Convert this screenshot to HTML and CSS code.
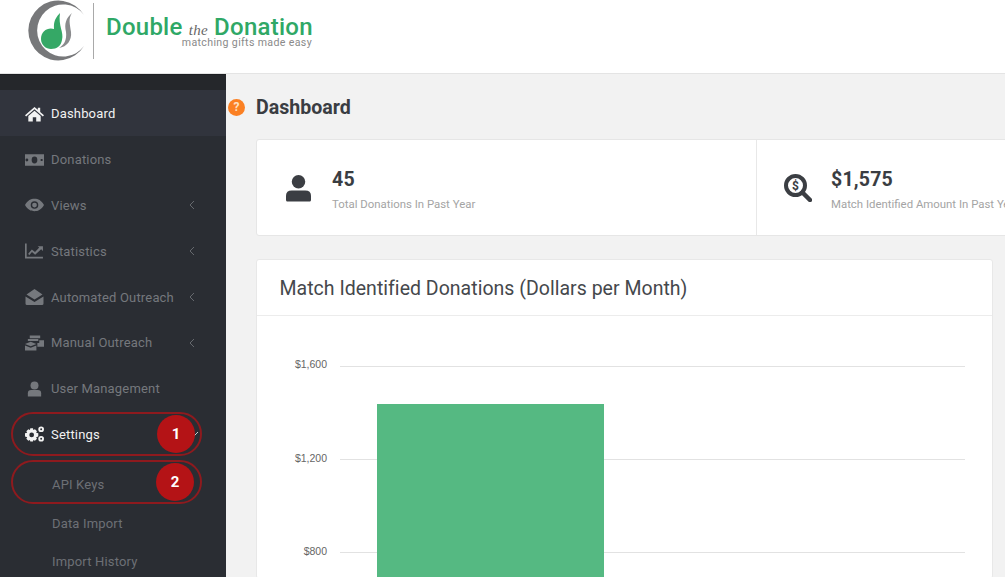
FILE: index.html
```html
<!DOCTYPE html>
<html lang="en">
<head>
    <meta charset="UTF-8">
    <meta name="viewport" content="width=device-width, initial-scale=1.0">
    <title>Dashboard</title>
    <link rel="stylesheet" href="styles.css">
</head>
<body>
    <header class="topo">
        <svg class="logo-marca" width="62" height="62" viewBox="0 0 62 62">
            <path d="M58 15 A30 30 0 1 0 58 46 A26 26 0 1 1 58 15 Z" fill="#77787a"/>
            <path d="M34 13 C27 20 28 25 28 29 C22 27 15 31 15 39 C15 45 20 49 25 49 C31 49 35 46 36 40 C38 32 32 26 34 13 Z" fill="#35a866"/>
            <path d="M46 13 C40 18 38 24 40 32 C41 40 38 45 33 48 C41 47 46 40 45 32 C44 24 42 19 46 13 Z" fill="#8a8b8d"/>
        </svg>
        <div class="logo-linha"></div>
        <div class="logo-texto">
            <div class="logo-nome">Double <span class="logo-the">the</span> Donation</div>
            <div class="logo-sub">matching gifts made easy</div>
        </div>
    </header>

    <div class="corpo">
        <!-- Menu lateral -->
        <nav class="lateral">
            <div class="lateral-topo"></div>
            <a class="item ativo">
                <svg class="icone" viewBox="0 0 20 16"><path d="M10 0.5 L13.5 3.6 V1.5 H16 V5.8 L20 9.3 L18.8 10.6 L10 3 L1.2 10.6 L0 9.3 Z M3.5 10.2 L10 4.6 L16.5 10.2 V16 H11.8 V11.5 H8.2 V16 H3.5 Z"/></svg>
                Dashboard
            </a>
            <a class="item">
                <svg class="icone" viewBox="0 0 20 14"><path fill-rule="evenodd" d="M0 1 H20 V13 H0 Z M7 7 A3 3.6 0 0 0 13 7 A3 3.6 0 0 0 7 7 Z M2 5.5 A1.2 1.2 0 0 0 2 8.5 A1.2 1.2 0 0 0 2 5.5 Z M16.5 6 H18.5 V8 H16.5 Z"/></svg>
                Donations
            </a>
            <a class="item">
                <svg class="icone" viewBox="0 0 20 14"><path fill-rule="evenodd" d="M0 7 C3 2 6 0.5 10 0.5 C14 0.5 17 2 20 7 C17 12 14 13.5 10 13.5 C6 13.5 3 12 0 7 Z M6 7 A4 4 0 0 0 14 7 A4 4 0 0 0 6 7 Z"/><circle cx="10" cy="7" r="2.5"/></svg>
                Views
                <svg class="seta" viewBox="0 0 6 10"><polyline points="5,1 1,5 5,9"/></svg>
            </a>
            <a class="item">
                <svg class="icone" viewBox="0 0 18 14"><path d="M0 0 H1.6 V12.4 H17 V14 H0 Z M3 9.5 L6.5 5.5 L9.5 8 L13.5 3.8 L12 2.5 H17 V7 L15.3 5.4 L9.6 10.5 L6.6 8 L4 11 Z"/></svg>
                Statistics
                <svg class="seta" viewBox="0 0 6 10"><polyline points="5,1 1,5 5,9"/></svg>
            </a>
            <a class="item">
                <svg class="icone" viewBox="0 0 18 16"><path d="M9 0 L17 5.5 L9 10.5 L1 5.5 Z M0 7.5 L9 13 L18 7.5 V14.5 Q18 16 16.5 16 H1.5 Q0 16 0 14.5 Z"/></svg>
                Automated Outreach
                <svg class="seta" viewBox="0 0 6 10"><polyline points="5,1 1,5 5,9"/></svg>
            </a>
            <a class="item">
                <svg class="icone" viewBox="0 0 20 16"><path d="M5 0 H16 V3 H5 Z M3 3.8 H14 V6 H3 Z M15 5 H20 V12 H13 V8 H15 Z M0 9 L6 6.8 L12 9 L6 11.5 Z M0 10.5 L6 13 L12 10.5 V16 H0 Z"/></svg>
                Manual Outreach
                <svg class="seta" viewBox="0 0 6 10"><polyline points="5,1 1,5 5,9"/></svg>
            </a>
            <a class="item">
                <svg class="icone" viewBox="0 0 20 16"><circle cx="10" cy="4.2" r="4.2"/><path d="M3 16 V12.5 Q3 9 6.5 9 H13.5 Q17 9 17 12.5 V16 Z"/></svg>
                User Management
            </a>
            <a class="item aberto">
                <svg class="icone" viewBox="0 0 20 16"><path fill-rule="evenodd" d="M5.6 2 H8.4 L8.8 3.8 L10.5 3 L12.6 5.1 L11.7 6.7 L14 7.3 V10.7 L11.7 11.3 L12.6 12.9 L10.5 15 L8.8 14.2 L8.4 16 H5.6 L5.2 14.2 L3.5 15 L1.4 12.9 L2.3 11.3 L0 10.7 V7.3 L2.3 6.7 L1.4 5.1 L3.5 3 L5.2 3.8 Z M4.5 9 A2.5 2.5 0 0 0 9.5 9 A2.5 2.5 0 0 0 4.5 9 Z"/><path fill-rule="evenodd" d="M17 0 A3 3 0 1 1 17 6 A3 3 0 1 1 17 0 Z M17 2 A1 1 0 1 0 17 4 A1 1 0 1 0 17 2 Z M17 10 A3 3 0 1 1 17 16 A3 3 0 1 1 17 10 Z M17 12 A1 1 0 1 0 17 14 A1 1 0 1 0 17 12 Z"/></svg>
                Settings
                <svg class="seta seta-baixo" viewBox="0 0 6 10"><polyline points="5,1 1,5 5,9"/></svg>
            </a>
            <a class="subitem">API Keys</a>
            <a class="subitem">Data Import</a>
            <a class="subitem">Import History</a>

            <!-- Marcacoes por cima da imagem -->
            <div class="oval oval-1"></div>
            <div class="oval oval-2"></div>
            <div class="bola bola-1">1</div>
            <div class="bola bola-2">2</div>
        </nav>

        <main class="conteudo">
            <div class="titulo-linha">
                <span class="ajuda">?</span>
                <h1 class="titulo">Dashboard</h1>
            </div>

            <section class="resumo">
                <div class="resumo-item">
                    <svg class="resumo-icone" width="25" height="28" viewBox="0 0 26 28"><circle cx="13" cy="7.5" r="7"/><path d="M1 28 Q0 28 0 26 V22 Q0 16.5 6 16.5 H20 Q26 16.5 26 22 V26 Q26 28 25 28 Z"/></svg>
                    <div>
                        <div class="numero">45</div>
                        <div class="legenda">Total Donations In Past Year</div>
                    </div>
                </div>
                <div class="resumo-item">
                    <svg class="resumo-icone" width="28" height="28" viewBox="0 0 28 28"><circle cx="11.5" cy="11.5" r="9.5" fill="none" stroke="#3b3e43" stroke-width="4"/><path d="M18.5 18.5 L26 26" stroke="#3b3e43" stroke-width="4.5" stroke-linecap="round"/><text x="11.5" y="16" text-anchor="middle" class="dolar">$</text></svg>
                    <div>
                        <div class="numero">$1,575</div>
                        <div class="legenda">Match Identified Amount In Past Year</div>
                    </div>
                </div>
            </section>

            <section class="painel">
                <h2 class="painel-titulo">Match Identified Donations (Dollars per Month)</h2>
                <svg class="grafico" width="735" height="262" viewBox="0 0 735 262">
                    <g class="grade">
                        <line x1="83" y1="50.5" x2="708" y2="50.5"/>
                        <line x1="83" y1="143.5" x2="708" y2="143.5"/>
                        <line x1="83" y1="236.5" x2="708" y2="236.5"/>
                    </g>
                    <g class="eixo">
                        <text x="70" y="52">$1,600</text>
                        <text x="70" y="146">$1,200</text>
                        <text x="70" y="239">$800</text>
                    </g>
                    <rect x="120" y="88" width="227" height="174" fill="#55b982"/>
                </svg>
            </section>
        </main>
    </div>
</body>
</html>
```

FILE: styles.css
```css
* {
    box-sizing: border-box;
}

html, body {
    height: 100%;
}

body {
    margin: 0;
    overflow: hidden;
    font-family: Roboto, "Liberation Sans", sans-serif;
    background: #f2f2f2;
}

.topo {
    height: 74px;
    background: #fff;
    border-bottom: 1px solid #e4e4e4;
    display: flex;
    align-items: flex-start;
    padding-left: 26px;
}

.logo-marca {
    flex: none;
}

.logo-linha {
    width: 1px;
    height: 56px;
    margin: 3px 0 0 5px;
    background: #a9a9a9;
}

.logo-texto {
    margin: 18px 0 0 12px;
    width: 206px;
}

.logo-nome {
    font-size: 24px;
    font-weight: 500;
    line-height: 18px;
    letter-spacing: 0.25px;
    color: #2fa866;
    white-space: nowrap;
}

.logo-the {
    font-family: "Liberation Serif", serif;
    font-style: italic;
    font-size: 15px;
    color: #666;
}

.logo-sub {
    margin-top: -1px;
    text-align: right;
    font-size: 10.6px;
    line-height: 10px;
    color: #8a8a8a;
    letter-spacing: 0.35px;
    white-space: nowrap;
}

.corpo {
    display: flex;
    height: 503px;
}

/* Menu lateral */
.lateral {
    position: relative;
    flex: none;
    width: 226px;
    background: #2a2d33;
    border-top: 1px solid #1d1f23;
    overflow: hidden;
}

.lateral-topo {
    height: 15px;
    background: #25272b;
}

.item {
    display: flex;
    align-items: center;
    height: 45.8px;
    padding: 2px 25px 0;
    font-size: 13px;
    letter-spacing: 0.17px;
    color: #75787d;
}

.item.ativo {
    background: #31343d;
    color: #f2f2f2;
}

.item.aberto {
    color: #f2f2f2;
}

.icone {
    flex: none;
    width: 19px;
    height: 16px;
    margin-right: 7px;
    fill: currentColor;
}

.seta {
    flex: none;
    width: 6px;
    height: 10px;
    margin-left: auto;
    margin-right: 6px;
    fill: none;
    stroke: currentColor;
    stroke-width: 1;
    opacity: 0.8;
}

.seta-baixo {
    transform: rotate(-90deg);
    margin-right: 4px;
}

.subitem {
    display: flex;
    align-items: center;
    height: 38.5px;
    padding: 2px 0 0 52px;
    font-size: 13px;
    letter-spacing: 0.17px;
    color: #6d7076;
}

.item.aberto + .subitem {
    margin-top: 8px;
}

.oval {
    position: absolute;
    left: 11px;
    width: 191px;
    height: 44px;
    border: 2px solid #8e1a1e;
    border-radius: 22px;
}

.oval-1 {
    top: 337px;
}

.oval-2 {
    top: 385px;
}

.bola {
    position: absolute;
    left: 156px;
    width: 38px;
    height: 38px;
    border-radius: 50%;
    background: #b41316;
    color: #fff;
    font-size: 15px;
    font-weight: 700;
    line-height: 38px;
    text-align: center;
}

.bola-1 {
    top: 340px;
    left: 157px;
}

.bola-2 {
    top: 388px;
}

/* Conteudo */
.conteudo {
    flex: 1;
    min-width: 0;
    padding: 0 12px 0 30px;
}

.titulo-linha {
    display: flex;
    align-items: center;
    height: 65px;
    padding-top: 1px;
    margin-left: -28px;
}

.ajuda {
    flex: none;
    width: 17px;
    height: 17px;
    margin-right: 11px;
    border-radius: 50%;
    background: #fb8023;
    color: #fde0c4;
    font-size: 12px;
    font-weight: 700;
    line-height: 17px;
    text-align: center;
}

.titulo {
    margin: 0;
    padding-top: 1px;
    font-size: 19.6px;
    font-weight: 700;
    color: #3a3d42;
}

.resumo {
    display: flex;
    width: 1000px;
    height: 97px;
    background: #fff;
    border: 1px solid #e6e6e6;
    border-radius: 3px;
}

.resumo-item {
    flex: none;
    display: flex;
    align-items: center;
    width: 500px;
    padding-left: 29px;
    border-right: 1px solid #e8e8e8;
}

.resumo-icone {
    flex: none;
    margin-right: 21px;
    fill: #3b3e43;
}

.resumo-item + .resumo-item {
    padding-left: 27px;
    border-right: 0;
}

.resumo-item + .resumo-item .resumo-icone {
    margin-right: 19px;
}

.dolar {
    font-family: Roboto, sans-serif;
    font-size: 12px;
    font-weight: 700;
    fill: #3b3e43;
}

.numero {
    padding-top: 2px;
    font-size: 19.5px;
    font-weight: 700;
    line-height: 26px;
    color: #3a3d42;
    letter-spacing: 0.2px;
}

.legenda {
    margin-top: 4px;
    font-size: 11.4px;
    line-height: 14px;
    color: #a4a4a4;
    white-space: nowrap;
}

.painel {
    width: 737px;
    margin-top: 23px;
    background: #fff;
    border: 1px solid #e8e8e8;
    border-radius: 3px;
}

.painel-titulo {
    margin: 0;
    height: 56px;
    padding: 1px 0 0 22.5px;
    font-size: 19.5px;
    font-weight: 400;
    line-height: 56px;
    letter-spacing: 0.02px;
    color: #45484c;
    border-bottom: 1px solid #ececec;
}

.grafico {
    display: block;
}

.grade line {
    stroke: #e2e2e2;
    stroke-width: 1;
}

.eixo text {
    font-family: "Liberation Sans", sans-serif;
    font-size: 10.5px;
    fill: #666;
    text-anchor: end;
}
```
